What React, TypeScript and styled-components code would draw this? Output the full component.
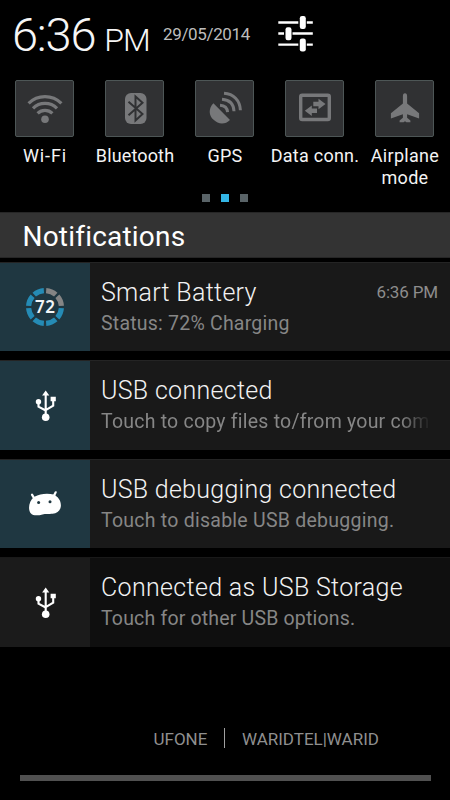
import React from "react";
import styled, { createGlobalStyle } from "styled-components";

const GlobalStyle = createGlobalStyle`
  *, *::before, *::after { box-sizing: border-box; }
  html, body { margin: 0; padding: 0; background: #000; }
  body { font-family: Roboto, "Liberation Sans", sans-serif; }
`;

const Shade = styled.main`
  width: 450px;
  height: 800px;
  display: flex;
  flex-direction: column;
  background: #000;
  color: #fff;
  overflow: hidden;
`;

const StatusBar = styled.header`
  display: flex;
  align-items: flex-start;
  height: 80px;
  padding-left: 12px;
  white-space: nowrap;
`;

const Clock = styled.div`
  width: 151px;
  font-weight: 300;
  font-size: 47px;
  line-height: 56px;
  padding-top: 7px;
  letter-spacing: -1.2px;
  color: #f6f6f6;
`;

const Meridiem = styled.span`
  font-size: 32px;
  letter-spacing: -0.9px;
  margin-left: 9px;
`;

const DateText = styled.div`
  width: 114px;
  padding-top: 23px;
  font-size: 17px;
  line-height: 22px;
  letter-spacing: -0.35px;
  color: #bdbdbd;
`;

const SettingsIcon = styled.svg`
  margin-top: 15px;
`;

const QuickSettings = styled.nav`
  display: grid;
  grid-template-columns: repeat(5, 90px);
  height: 112px;
`;

const Toggle = styled.div`
  display: flex;
  flex-direction: column;
  align-items: center;
`;

const Tile = styled.div`
  display: flex;
  width: 59px;
  height: 57px;
  margin-right: 1px;
  border: 1px solid #4d5656;
  border-radius: 2px;
  background: #303133;
  color: #77787a;
  svg { display: block; }
`;

const ToggleLabel = styled.div<{ $ls: number }>`
  margin-top: 8px;
  font-size: 18px;
  line-height: 22px;
  text-align: center;
  white-space: pre;
  letter-spacing: ${(p) => p.$ls}px;
  color: #f4f4f4;
`;

const Pager = styled.div`
  display: flex;
  justify-content: center;
  gap: 11px;
  height: 20px;
  padding-top: 2px;
`;

const Dot = styled.i<{ $active?: boolean }>`
  width: 8px;
  height: 8px;
  background: ${(p) => (p.$active ? "#33b5e5" : "#596367")};
`;

const SectionTitle = styled.h1`
  margin: 0 0 4px;
  height: 46px;
  padding-left: 22.5px;
  background: #333;
  border-top: 1px solid #262626;
  border-bottom: 1px solid #262626;
  font-size: 28px;
  font-weight: 400;
  line-height: 47px;
  letter-spacing: 0.2px;
`;

const List = styled.section`
  display: grid;
  grid-template-rows: repeat(4, 89.4px);
  row-gap: 9px;
  height: 385px;
`;

const Card = styled.article<{ $ongoing?: boolean }>`
  display: flex;
  background: ${(p) => (p.$ongoing ? "#191919" : "#0f0f0f")};
  border-top: 1px solid ${(p) => (p.$ongoing ? "#242424" : "#191919")};
`;

const IconCell = styled.div<{ $ongoing?: boolean }>`
  width: 90px;
  background: ${(p) => (p.$ongoing ? "#1f3741" : "#1b1b1b")};
  svg { display: block; }
`;

const Body = styled.div`
  flex: 1;
  min-width: 0;
  padding: 14px 12px 0 11px;
`;

const TitleRow = styled.div`
  display: flex;
  justify-content: space-between;
  height: 32px;
  white-space: nowrap;
`;

const Title = styled.h2<{ $ls: number }>`
  margin: 0;
  font-size: 25px;
  font-weight: 300;
  line-height: 32px;
  letter-spacing: ${(p) => p.$ls}px;
  color: #f2f2f2;
`;

const Time = styled.time`
  font-size: 17px;
  line-height: 31px;
  letter-spacing: -0.15px;
  color: #8d8d8d;
`;

const Detail = styled.p<{ $ls: number; $fade?: boolean }>`
  margin: 0;
  white-space: nowrap;
  font-size: 19.5px;
  line-height: 30px;
  letter-spacing: ${(p) => p.$ls}px;
  color: #868686;
  mask-image: ${(p) => (p.$fade ? "linear-gradient(90deg, #000 300px, transparent 330px)" : "none")};
`;

const Carriers = styled.footer`
  display: flex;
  align-items: center;
  height: 22px;
  margin-top: 80px;
  padding-left: 153.5px;
  font-size: 17px;
  white-space: nowrap;
  color: #8f8f8f;
`;

const Carrier = styled.span`
  padding-top: 1px;
  line-height: 22px;
`;

const Separator = styled.i`
  width: 1px;
  height: 20px;
  margin: 0 17px 0 16.5px;
  background: #a0a0a0;
`;

const Handle = styled.div`
  width: 411px;
  height: 6px;
  margin: 26px 0 0 20px;
  background: #505050;
`;

const Wifi = () => (
  <svg width="57" height="55" viewBox="16 81 57 55" fill="none" stroke="currentColor" strokeWidth="3.2">
    <path d="M28.6 103.4a23 23 0 0 1 32.8 0M33 108.4a17 17 0 0 1 24 0M37.6 113.4a10.6 10.6 0 0 1 14.8 0" />
    <circle cx="45" cy="119.3" r="3.8" fill="currentColor" stroke="none" />
  </svg>
);

const Bluetooth = () => (
  <svg width="57" height="55" viewBox="106 81 57 55">
    <rect x="125" y="93" width="21.5" height="31" rx="6" fill="currentColor" />
    <path d="M128.5 101.8L142.5 114l-7 6.5v-24l7 6.3-14 12.4" fill="none" stroke="#303133" strokeWidth="2" />
  </svg>
);

const Gps = () => (
  <svg width="57" height="55" viewBox="196 81 57 55">
    <path d="M213.4 103.2c-5.2 5.4-4.6 12.4.2 16.6 4.8 4.8 11.6 5 16.4.1z" fill="currentColor" />
    <path d="M224 93.200c9.5.6 16 7 16.400 17M222 99.200c7.5.6 11.700 5 12 12M220 105.200c4.800.3 7.300 2.800 7.600 7" fill="none" stroke="currentColor" strokeWidth="3" />
  </svg>
);

const DataConnection = () => (
  <svg width="57" height="55" viewBox="286 81 57 55">
    <rect x="300.7" y="95.2" width="28.6" height="24.3" rx="1.5" fill="none" stroke="currentColor" strokeWidth="3.4" />
    <path d="M313.3 101.8h5.200v-3l7 5.200-7 5.200v-3h-5.200zM317 108.600h-5.200v-3l-7 5.200 7 5.200v-3h5.200z" fill="currentColor" />
  </svg>
);

const Airplane = () => (
  <svg width="57" height="55" viewBox="376 81 57 55">
    <path d="M405 93.300c1.500 0 2.100 1.300 2.100 3v7.100l12 9.800v5.200l-12-4.200v3.500l3.300 2.700v1.800h-4l-1.400-1-1.400 1h-4v-1.800l3.300-2.700v-3.500l-12 4.200v-5.200l12-9.800v-7.100c0-1.700.6-3 2.100-3z" fill="currentColor" />
  </svg>
);

const Sliders = () => (
  <SettingsIcon width="36" height="38" viewBox="277 15 36 38" fill="#fff">
    <path d="M278.300 21.200h20v2.600h-20zM306.800 21.200h6v2.600h-6zM278.300 32.200h5.700v2.600h-5.700zM292.500 32.200h20.300v2.600h-20.300zM278.300 43.600h20v2.200h-20zM306.800 43.600h6v2.200h-6z" />
    <rect x="299.800" y="16" width="6" height="13" rx="2.200" />
    <rect x="285.500" y="27.300" width="6" height="13" rx="2.200" />
    <rect x="299.800" y="38.500" width="6" height="13" rx="2.200" />
  </SettingsIcon>
);

const RING_RADIUS = 16.4;

const ringPoint = (deg: number) => {
  const a = (deg * Math.PI) / 180;
  return `${45 + RING_RADIUS * Math.sin(a)} ${45 - RING_RADIUS * Math.cos(a)}`;
};

const RingValue = styled.text`
  font-family: "Noto Sans", sans-serif;
  font-size: 17px;
  font-weight: 600;
`;

const BatteryRing = () => (
  <svg width="90" height="88" viewBox="0 1 90 88">
    {Array.from({ length: 8 }, (_, i) => (
      <path
        key={i}
        d={`M${ringPoint(i * 45 + 4)}A${RING_RADIUS} ${RING_RADIUS} 0 0 1 ${ringPoint(i * 45 + 41)}`}
        fill="none"
        stroke={i < 2 ? "#858585" : "#258bb5"}
        strokeWidth="5.2"
      />
    ))}
    <RingValue x="45" y="51" textAnchor="middle" textLength="20" fill="#f2f6f7">72</RingValue>
  </svg>
);

const Usb = () => (
  <svg width="90" height="88" viewBox="0 1 90 88" fill="none" stroke="#fff">
    <path d="M45.700 34v23M38.500 41.500v5.200l7.200 3.800M53.200 39v6.700l-7.500 4.500" strokeWidth="2.100" />
    <path d="M45.700 30.500l3.600 5h-7.200zM50.600 36.700h5.200v4.600h-5.200z" fill="#fff" stroke="none" />
    <circle cx="38.500" cy="41.700" r="2.700" fill="#fff" stroke="none" />
    <circle cx="45.700" cy="57.200" r="3.800" fill="#fff" stroke="none" />
  </svg>
);

const AndroidHead = () => (
  <svg width="90" height="88" viewBox="0 1 90 88">
    <path d="M32 35.600l2.600 4.500M55.700 33.300l-2.300 4.500" stroke="#fff" strokeWidth="2.200" strokeLinecap="round" />
    <path d="M34.400 37.800C40 34.600 48 34.100 53.500 35.600c4.700 2 7.300 6.200 7.400 10.600 0 5-3.400 8-8.400 8.600-3 .4-7-.3-10 .6-4.500 1.300-9.300 1.700-12-1.500-2.600-3.700-1.900-11.800 3.900-16.100z" fill="#fff" />
    <circle cx="38.600" cy="43.500" r="1.500" fill="#1f3741" />
    <circle cx="50" cy="42.700" r="1.500" fill="#1f3741" />
  </svg>
);

const toggles = [
  { label: "Wi-Fi", icon: <Wifi />, ls: 0.9 },
  { label: "Bluetooth", icon: <Bluetooth />, ls: 0.15 },
  { label: "GPS", icon: <Gps />, ls: 0.3 },
  { label: "Data conn.", icon: <DataConnection />, ls: 0.25 },
  { label: "Airplane\nmode", icon: <Airplane />, ls: 0.3 },
];

const notifications = [
  { title: "Smart Battery", detail: "Status: 72% Charging", time: "6:36 PM", icon: <BatteryRing />, ongoing: true, tls: 0.3, dls: 0.22 },
  { title: "USB connected", detail: "Touch to copy files to/from your com", icon: <Usb />, ongoing: true, tls: 0.3, dls: 0.22, fade: true },
  { title: "USB debugging connected", detail: "Touch to disable USB debugging.", icon: <AndroidHead />, ongoing: true, tls: 0.27, dls: 0.25 },
  { title: "Connected as USB Storage", detail: "Touch for other USB options.", icon: <Usb />, ongoing: false, tls: 0.33, dls: 0.18 },
];

export default function App() {
  return (
    <>
      <GlobalStyle />
      <Shade>
        <StatusBar>
          <Clock>6:36<Meridiem>PM</Meridiem></Clock>
          <DateText>29/05/2014</DateText>
          <Sliders />
        </StatusBar>
        <QuickSettings>
          {toggles.map((t) => (
            <Toggle key={t.label}>
              <Tile>{t.icon}</Tile>
              <ToggleLabel $ls={t.ls}>{t.label}</ToggleLabel>
            </Toggle>
          ))}
        </QuickSettings>
        <Pager>
          <Dot />
          <Dot $active />
          <Dot />
        </Pager>
        <SectionTitle>Notifications</SectionTitle>
        <List>
          {notifications.map((n) => (
            <Card key={n.title} $ongoing={n.ongoing}>
              <IconCell $ongoing={n.ongoing}>{n.icon}</IconCell>
              <Body>
                <TitleRow>
                  <Title $ls={n.tls}>{n.title}</Title>
                  {n.time && <Time>{n.time}</Time>}
                </TitleRow>
                <Detail $ls={n.dls} $fade={n.fade}>{n.detail}</Detail>
              </Body>
            </Card>
          ))}
        </List>
        <Carriers>
          <Carrier>UFONE</Carrier>
          <Separator />
          <Carrier>WARIDTEL|WARID</Carrier>
        </Carriers>
        <Handle />
      </Shade>
    </>
  );
}
